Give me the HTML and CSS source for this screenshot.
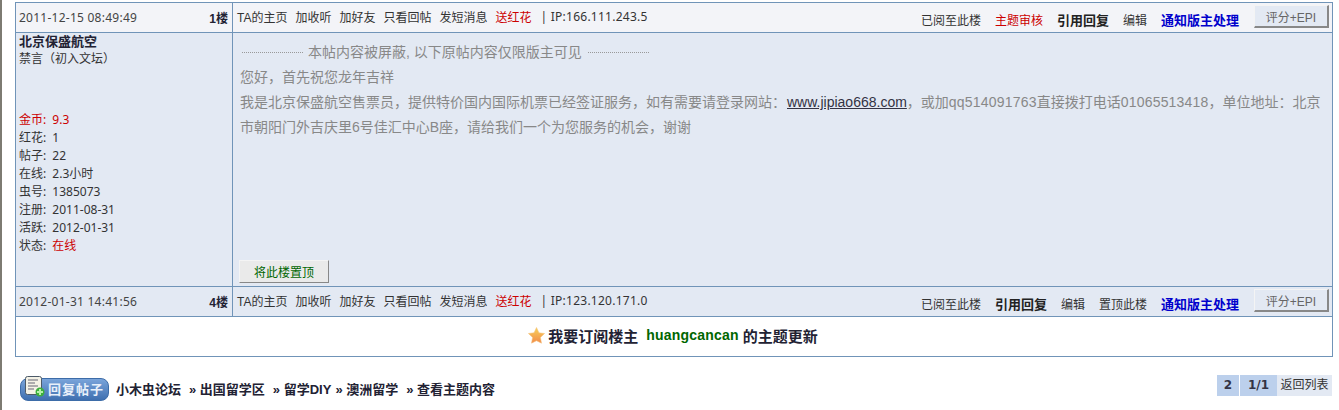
FILE: index.html
```html
<!DOCTYPE html>
<html lang="zh-CN">

<head>
	<meta charset="UTF-8">
	<title>小木虫论坛</title>
	<link rel="stylesheet" href="styles.css">
</head>

<body>
	<div class="thread">
		<div class="post-bar light">
			<div class="bar-left"><span class="num">2011-12-15 08:49:49</span><b class="floor">1楼</b></div>
			<div class="bar-right">
				<div class="links">
					<a>TA的主页</a><a>加收听</a><a>加好友</a><a>只看回帖</a><a>发短消息</a><a class="red">送红花</a>
					<span class="ip num">| IP:166.111.243.5</span>
				</div>
				<div class="actions">
					<a>已阅至此楼</a><a class="red">主题审核</a><a class="strong">引用回复</a><a>编辑</a><a class="notify">通知版主处理</a>
					<button class="rate">评分+EPI</button>
				</div>
			</div>
		</div>
		<div class="post-body">
			<div class="user">
				<b class="user-name">北京保盛航空</b>
				<div>禁言（初入文坛）</div>
				<ul class="stats">
					<li class="red">金币: <span class="val">9.3</span></li>
					<li>红花: <span class="val">1</span></li>
					<li>帖子: <span class="val">22</span></li>
					<li>在线: <span class="val">2.3小时</span></li>
					<li>虫号: <span class="val">1385073</span></li>
					<li>注册: <span class="val">2011-08-31</span></li>
					<li>活跃: <span class="val">2012-01-31</span></li>
					<li>状态: <span class="val red">在线</span></li>
				</ul>
			</div>
			<div class="content">
				<div class="message">
					<p class="blocked"><span class="dots"></span>本帖内容被屏蔽, 以下原帖内容仅限版主可见<span class="dots"></span></p>
					<p>您好，首先祝您龙年吉祥</p>
					<p>我是北京保盛航空售票员，提供特价国内国际机票已经签证服务，如有需要请登录网站：<a class="site">www.jipiao668.com</a>，或加<span class="digits">qq514091763</span>直接拨打电话<span class="digits">01065513418</span>，单位地址：北京市朝阳门外吉庆里6号佳汇中心B座，请给我们一个为您服务的机会，谢谢</p>
				</div>
				<button class="pin">将此楼置顶</button>
			</div>
		</div>
		<div class="post-bar">
			<div class="bar-left"><span class="num">2012-01-31 14:41:56</span><b class="floor">4楼</b></div>
			<div class="bar-right">
				<div class="links">
					<a>TA的主页</a><a>加收听</a><a>加好友</a><a>只看回帖</a><a>发短消息</a><a class="red">送红花</a>
					<span class="ip num">| IP:123.120.171.0</span>
				</div>
				<div class="actions">
					<a>已阅至此楼</a><a class="strong">引用回复</a><a>编辑</a><a>置顶此楼</a><a class="notify">通知版主处理</a>
					<button class="rate">评分+EPI</button>
				</div>
			</div>
		</div>
		<div class="subscribe">
			<svg class="star" width="17" height="17" viewBox="0 0 16 16">
				<defs>
					<linearGradient id="starFill" x1="0" y1="0" x2="0" y2="1">
						<stop offset="0" stop-color="#f8d25a" />
						<stop offset="1" stop-color="#f28a4a" />
					</linearGradient>
				</defs>
				<path d="M8 0.5l2.3 5 5.3.6-3.9 3.7 1 5.4L8 12.9l-4.7 2.3 1-5.4L.4 6.1l5.3-.6z" fill="url(#starFill)" stroke="#f3c27a" stroke-width=".5" />
			</svg>
			<b>我要订阅楼主</b><b class="owner">huangcancan</b><b>的主题更新</b>
		</div>
	</div>
	<div class="footer">
		<div class="crumbs">
			<span class="reply-btn">
				<svg class="reply-icon" width="20" height="21" viewBox="0 0 20 21">
					<rect x=".5" y=".5" width="16" height="18" rx="2" fill="#f4f2e6" stroke="#4c5a68" />
					<path d="M3 4h10M3 7h7M3 10h10M3 13h6" stroke="#667" stroke-width="1.1" />
					<circle cx="15" cy="16" r="4.5" fill="#3cae3c" />
					<path d="M15 13v6M12 16h6" stroke="#b4f0a8" stroke-width="2" />
				</svg>
				<b>回复帖子</b>
			</span>
			<b class="path">小木虫论坛</b><b class="path sep">» 出国留学区</b><b class="path sep">» 留学DIY</b><b class="path tight">» 澳洲留学</b><b class="path sep">» 查看主题内容</b>
		</div>
		<div class="pager">
			<b class="page">2</b><b class="page wide">1/1</b><a class="back">返回列表</a>
		</div>
	</div>
</body>

</html>
```
FILE: styles.css
```css
body {
	margin: 0;
	padding: 2px 6px 0 13px;
	border-left: 2px solid #7d7b72;
	font-family: "Liberation Sans", "Noto Sans CJK SC", sans-serif;
	font-size: 12px;
	color: #333;
	background: #fff;
	height: 408px;
	overflow: hidden;
}

a {
	cursor: pointer;
}

.red {
	color: #c00;
}

.num {
	font-family: "Noto Sans", "Noto Sans CJK SC", sans-serif;
	letter-spacing: 0.25px;
}

.digits {
	letter-spacing: 0.2px;
}

.thread {
	border: 1px solid #7094b8;
}

.post-bar {
	display: flex;
	height: 29px;
	background: #e3e9f3;
	border-top: 1px solid #7094b8;
}

.post-bar.light {
	background: #f3f4f8;
	border-top: 0;
	border-bottom: 1px solid #7094b8;
}

.bar-left {
	width: 217px;
	box-sizing: border-box;
	padding: 0 4px 1px 3px;
	display: flex;
	justify-content: space-between;
	align-items: center;
	border-right: 1px solid #7094b8;
	color: #444;
}

.floor {
	color: #223;
}

.bar-right {
	flex: 1;
	display: flex;
	justify-content: space-between;
	padding: 0 3px 0 4px;
}

.links {
	display: flex;
	align-items: center;
	padding-bottom: 2px;
}

.links a {
	margin-right: 8px;
}

.ip {
	margin-left: 1px;
}

.actions {
	display: flex;
	align-items: center;
}

.actions a {
	margin-left: 14px;
	position: relative;
	top: 2px;
}

.strong {
	font-size: 13px;
	font-weight: bold;
	color: #222;
}

.notify {
	font-size: 13px;
	font-weight: bold;
	color: #00c;
}

.rate,
.pin {
	font: inherit;
	border: 1px solid #888;
	border-top-color: #f4f4f4;
	border-left-color: #f4f4f4;
	height: 23px;
	padding: 0;
}

.rate {
	width: 75px;
	margin-left: 15px;
	margin-bottom: 2px;
	background: #e3e9f3;
	border-right-width: 2px;
	border-bottom-width: 2px;
	color: #666;
}

.post-body {
	display: flex;
	height: 253px;
	background: #e3e9f3;
}

.user {
	width: 217px;
	box-sizing: border-box;
	padding: 1px 3px;
	border-right: 1px solid #7094b8;
	line-height: 18px;
}

.user-name {
	display: block;
	font-size: 13px;
	line-height: 16px;
	color: #223;
}

.stats {
	list-style: none;
	margin: 43px 0 0;
	padding: 0;
	font-family: "Noto Sans", "Noto Sans CJK SC", sans-serif;
}

.val {
	margin-left: 3px;
}

.content {
	flex: 1;
	padding: 7px 8px 3px 7px;
	display: flex;
	flex-direction: column;
	justify-content: space-between;
	align-items: flex-start;
}

.message {
	font-size: 14px;
	line-height: 25px;
	color: #888;
}

.message p {
	margin: 0;
}

.blocked {
	display: flex;
	align-items: center;
}

.dots {
	width: 61px;
	margin: 0 6px;
	border-top: 1px dotted #999;
}

.dots:first-child {
	margin-left: 2px;
	margin-right: 5px;
}

.site {
	margin-left: 1px;
	color: #334;
	text-decoration: underline;
}

.pin {
	width: 90px;
	margin-left: -1px;
	color: #060;
	background: #eaeaea;
}

.subscribe {
	box-sizing: border-box;
	height: 40px;
	padding: 0 2px 3px 0;
	background: #fff;
	border-top: 1px solid #7094b8;
	display: flex;
	align-items: center;
	justify-content: center;
	font-size: 15px;
	color: #223;
}

.star {
	margin-right: 3px;
}

.owner {
	color: #060;
	font-size: 14px;
	letter-spacing: 0.2px;
	margin: 0 4px 0 8px;
}

.footer {
	display: flex;
	justify-content: space-between;
	align-items: flex-start;
	margin-top: 18px;
	padding-left: 5px;
}

.crumbs {
	display: flex;
	align-items: center;
	margin-top: 3px;
	font-size: 13px;
}

.reply-btn {
	position: relative;
	width: 89px;
	height: 23px;
	margin-right: 7px;
	box-sizing: border-box;
	padding-left: 27px;
	background: linear-gradient(#7aa4da, #3f70b0);
	border: 1px solid #3d6ca8;
	border-radius: 8px;
	color: #e8f0fa;
	line-height: 21px;
	letter-spacing: 1px;
}

.reply-icon {
	position: absolute;
	left: 4px;
	top: -3px;
}

.path {
	color: #223;
	margin-bottom: 3px;
}

.sep {
	margin-left: 8px;
}

.tight {
	margin-left: 4px;
}

.pager {
	display: flex;
	height: 21px;
	line-height: 21px;
	margin-right: 1px;
}

.page {
	background: #bcd0ec;
	color: #334;
	width: 22px;
	text-align: center;
	margin-right: 1px;
	font-family: "DejaVu Sans", sans-serif;
}

.page.wide {
	width: 37px;
	margin-right: 0;
}

.back {
	background: #e3e9f3;
	width: 55px;
	text-align: center;
}
```
